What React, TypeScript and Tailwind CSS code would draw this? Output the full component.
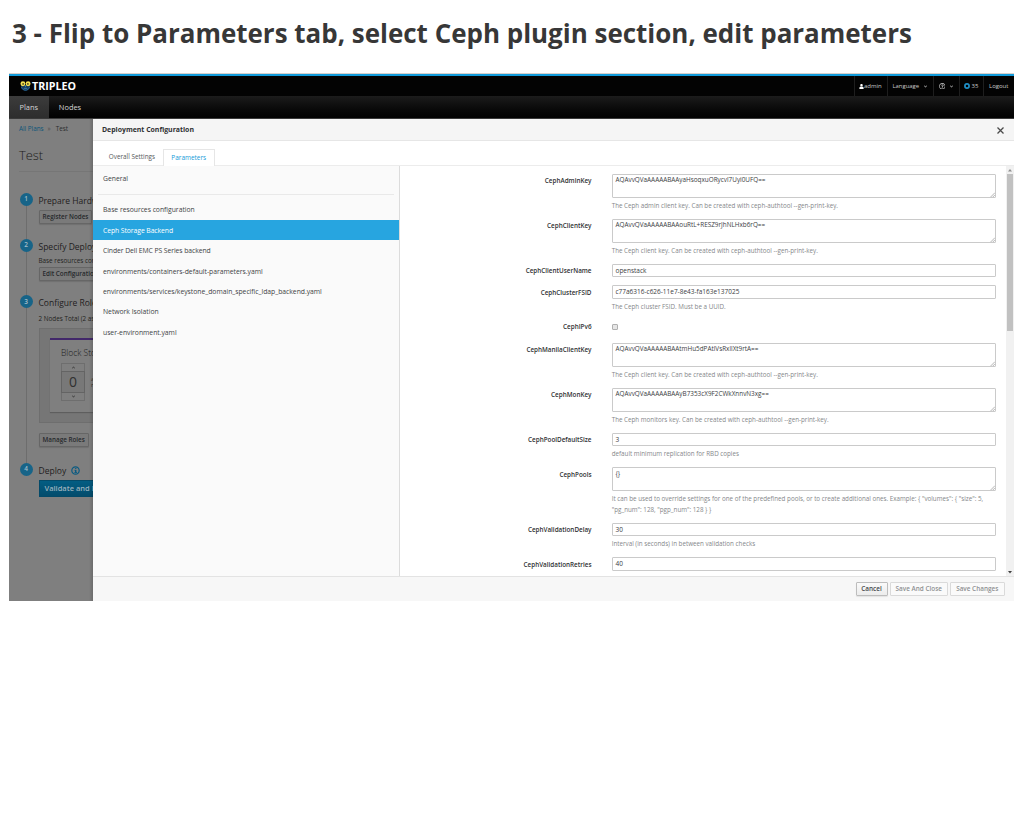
import type { ReactNode } from "react";
import { FaAngleDown, FaAngleUp, FaRegQuestionCircle, FaUser } from "react-icons/fa";

const Logo = () => (
  <svg viewBox="0 0 22 20" className="h-[10px] w-[11px] shrink-0">
    <path d="M2 8 C1 15 5 19.4 11 19.4 S21 15 20 8 Z" fill="#16395a" />
    <path d="M3 12 C4.5 16.5 7.5 18.4 11 18.4 S17.5 16.5 19 12" fill="none" stroke="#2a6fa3" strokeWidth="1.8" />
    <path d="M7.5 14.6 h7" stroke="#4b97c2" strokeWidth="1.4" />
    <circle cx="5.8" cy="5.4" r="4.9" fill="#f3e04f" />
    <circle cx="16.2" cy="5.4" r="4.9" fill="#f3e04f" />
    <circle cx="6.2" cy="5.8" r="1.7" fill="#3a3a20" />
    <circle cx="15.8" cy="5.8" r="1.7" fill="#3a3a20" />
    <path d="M9.4 9 h3.2 l-1.6 3.4 z" fill="#3aa0cf" />
  </svg>
);

const Utility = ({ w, children }: { w: string; children: ReactNode }) => (
  <div className={`flex h-full items-center border-l border-[#1e1e1e] ${w}`}>{children}</div>
);

const Circle = ({ n }: { n: number }) => (
  <div className="absolute -left-[19px] -top-[0.5px] flex size-[13px] items-center justify-center rounded-full bg-[#176488] pt-px text-[6.5px] font-semibold leading-none text-[#a3bcc8]">
    {n}
  </div>
);

const GreyButton = ({ children }: { children: ReactNode }) => (
  <div className="flex h-[14px] w-fit items-center rounded-[1px] border border-[#666] bg-[#7a7a7a] px-[3px] text-[6.32px] font-semibold text-[#26292c] shadow-[0_1px_1px_rgba(0,0,0,0.12)]">
    {children}
  </div>
);

const Step = ({ n, title, h, children }: { n: number; title: ReactNode; h: string; children: ReactNode }) => (
  <div className={`relative ${h}`}>
    <Circle n={n} />
    <div className="flex h-[14px] items-center pt-[2px] text-[8.5px] text-[#1f2021]">{title}</div>
    {children}
  </div>
);

const Backdrop = () => (
  <div className="relative h-full w-[83.5px] shrink-0 overflow-hidden whitespace-nowrap bg-[#7f7f7f]">
    <div className="flex h-[18px] items-center pl-[10px] pt-[0.5px] text-[6.3px]">
      <span className="text-[#0c557a]">All Plans</span>
      <span className="ml-[4px] text-[#4c4c4c]">»</span>
      <span className="ml-[5px] text-[#2c2d2e]">Test</span>
    </div>
    <div className="ml-[10px] flex h-[35px] items-center border-b border-[#767676] pt-[3px] text-[12.9px] font-light text-[#1d1d1d]">
      Test
    </div>
    <div className="relative ml-[29.5px] mt-[21px]">
      <div className="absolute -left-[13px] top-[6px] h-[264px] w-px bg-[#6d6d6d]" />
      <Step n={1} title="Prepare Hardware" h="h-[46px]">
        <div className="mt-[2.5px]">
          <GreyButton>Register Nodes</GreyButton>
        </div>
      </Step>
      <Step n={2} title="Specify Deploym" h="h-[56.5px]">
        <div className="flex h-[13.5px] items-center pt-[3px] text-[6.34px] text-[#1f1f20]">Base resources conf</div>
        <GreyButton>Edit Configuration</GreyButton>
      </Step>
      <Step n={3} title="Configure Roles" h="h-[167.5px]">
        <div className="flex h-[18px] items-center pt-px text-[6.34px] text-[#1f1f20]">2 Nodes Total (2 ass</div>
        <div className="h-[95px] w-[120px] border border-[#6e6e6e] bg-[#767676] pl-[10.5px] pt-[9.5px]">
          <div className="h-[73.5px] border-t-2 border-[#42286a] bg-[#7f7f7f] pl-[11px] shadow-[0_1px_1px_rgba(0,0,0,0.2)]">
            <div className="flex h-[23px] items-center pt-[3px] text-[8.5px] font-light text-[#1c1c1c]">Block Stor</div>
            <div className="flex items-center">
              <div className="flex h-[37.5px] w-[24px] flex-col border border-[#6e6e6e] text-[#444]">
                <div className="flex h-[6.5px] items-center justify-center">
                  <FaAngleUp className="size-[5px]" />
                </div>
                <div className="-mx-px flex flex-1 items-center justify-center border border-[#646464] bg-[#787878] text-[14px] leading-none text-[#303030]">
                  0
                </div>
                <div className="flex h-[6.5px] items-center justify-center">
                  <FaAngleDown className="size-[5px]" />
                </div>
              </div>
              <div className="ml-[6px] text-[5.8px] leading-[6px] text-[#333]">
                a
                <br />
                n
              </div>
            </div>
          </div>
        </div>
        <div className="mt-[10px]">
          <GreyButton>Manage Roles</GreyButton>
        </div>
      </Step>
      <Step
        n={4}
        h="h-[40px]"
        title={
          <>
            Deploy
            <svg viewBox="0 0 18 18" className="mb-[2px] ml-[4.5px] size-[9px]">
              <circle cx="9" cy="9" r="7.4" fill="none" stroke="#0b5b82" strokeWidth="2.4" />
              <path d="M9.4 7.8 v5" stroke="#0b5b82" strokeWidth="3" />
              <path d="M7 8.6 h2 M6.8 13 h5.2 M7.9 5 h3" stroke="#0b5b82" strokeWidth="1.8" />
            </svg>
          </>
        }
      >
        <div className="mt-[3px] flex h-[17px] w-[90px] items-center border border-[#044a69] bg-linear-to-b from-[#035d83] to-[#034c6c] pl-[5px] text-[7.5px] font-semibold text-[#99b2be]">
          Validate and De
        </div>
      </Step>
    </div>
    <div className="absolute inset-y-0 right-0 w-[4px] bg-linear-to-r from-transparent to-black/15" />
  </div>
);

const items = [
  "Base resources configuration",
  "Ceph Storage Backend",
  "Cinder Dell EMC PS Series backend",
  "environments/containers-default-parameters.yaml",
  "environments/services/keystone_domain_specific_ldap_backend.yaml",
  "Network Isolation",
  "user-environment.yaml",
];

const Sidebar = () => (
  <div className="h-full w-[307px] shrink-0 border-r border-[#dcdcdc] bg-[#fafafa] text-[6.8px] text-[#414345]">
    <div className="flex h-[26px] items-center pl-[10.5px] pt-[1.5px]">General</div>
    <div className="ml-[5px] mr-[5px] mt-[2px] h-[1.5px] bg-[#e9e9e9]" />
    <div className="mt-[4.5px]">
      {items.map((t) => (
        <div
          key={t}
          className={`flex h-[20.45px] items-center whitespace-nowrap pl-[10.5px] pt-[1.2px] ${t.startsWith("Ceph") ? "bg-[#27a5e0] text-white" : ""}`}
        >
          <span className={t.startsWith("C") ? "tracking-[-0.07px]" : "tracking-[-0.02px]"}>{t}</span>
        </div>
      ))}
    </div>
  </div>
);

type Field = { label: string; h: string; kind: "area" | "input" | "check"; value?: string; help?: ReactNode };

const fields: Field[] = [
  { label: "CephAdminKey", h: "h-[45px]", kind: "area", value: "AQAvvQVaAAAAABAAyaHsoqxuORycvl7Uyi0UFQ==", help: "The Ceph admin client key. Can be created with ceph-authtool --gen-print-key." },
  { label: "CephClientKey", h: "h-[45px]", kind: "area", value: "AQAvvQVaAAAAABAAouRtL+RESZ9rJhNLHxb6rQ==", help: "The Ceph client key. Can be created with ceph-authtool --gen-print-key." },
  { label: "CephClientUserName", h: "h-[21.5px]", kind: "input", value: "openstack" },
  { label: "CephClusterFSID", h: "h-[34.5px]", kind: "input", value: "c77a6316-c626-11e7-8e43-fa163e137025", help: "The Ceph cluster FSID. Must be a UUID." },
  { label: "CephIPv6", h: "h-[23px]", kind: "check" },
  { label: "CephManilaClientKey", h: "h-[45px]", kind: "area", value: "AQAvvQVaAAAAABAAtmHu5dPAtlVsRxllXt9rtA==", help: "The Ceph client key. Can be created with ceph-authtool --gen-print-key." },
  { label: "CephMonKey", h: "h-[45px]", kind: "area", value: "AQAvvQVaAAAAABAAyB7353cX9F2CWkXnnvN3xg==", help: "The Ceph monitors key. Can be created with ceph-authtool --gen-print-key." },
  { label: "CephPoolDefaultSize", h: "h-[34.5px]", kind: "input", value: "3", help: "default minimum replication for RBD copies" },
  {
    label: "CephPools",
    h: "h-[55.5px]",
    kind: "area",
    value: "{}",
    help: (
      <>
        It can be used to override settings for one of the predefined pools, or to create additional ones. Example: {'{ "volumes": { "size": 5,'}
        <br />
        {'"pg_num": 128, "pgp_num": 128 } }'}
      </>
    ),
  },
  { label: "CephValidationDelay", h: "h-[34.5px]", kind: "input", value: "30", help: "Interval (in seconds) in between validation checks" },
  { label: "CephValidationRetries", h: "h-[13.5px]", kind: "input", value: "40" },
];

const FieldRow = ({ f }: { f: Field }) => (
  <div className={`flex ${f.h}`}>
    <div className="flex h-[13.5px] w-[192px] shrink-0 items-center justify-end whitespace-nowrap pt-px text-[6.33px] font-semibold text-[#2f3133]">
      {f.label}
    </div>
    <div className="ml-[20.2px] w-[384px]">
      {f.kind === "area" && (
        <div className="relative h-[24px] rounded-[1px] border border-[#cacaca] bg-white pl-[2.8px] pt-[0.5px] text-[6.36px] leading-[10px] text-[#3b3d3f]">
          {f.value}
          <svg viewBox="0 0 8 8" className="absolute bottom-0 right-0 size-[5px]">
            <path d="M1 8 L8 1 M4.5 8 L8 4.5" stroke="#8a8a8a" strokeWidth="1" />
          </svg>
        </div>
      )}
      {f.kind === "input" && (
        <div className="flex h-[13.5px] items-center rounded-[1px] border border-[#cacaca] bg-white pl-[2.8px] pt-[1.5px] text-[6.49px] leading-none text-[#3b3d3f]">
          {f.value}
        </div>
      )}
      {f.kind === "check" && (
        <div className="mt-[4px] size-[6px] rounded-[1px] border border-[#b0b0b0] bg-[#e6e6e6]" />
      )}
      {f.help && <div className="mt-[3.4px] whitespace-nowrap text-[6.26px] leading-[10.5px] text-[#85878a]">{f.help}</div>}
    </div>
  </div>
);

const Scrollbar = () => (
  <div className="flex h-full w-[8px] shrink-0 flex-col items-center bg-[#f1f1f1]">
    <svg viewBox="0 0 8 8" className="size-[8px] shrink-0">
      <path d="M2 5.5 L4 3 L6 5.5 Z" fill="#8f8f8f" />
    </svg>
    <div className="h-[157px] w-[6px] shrink-0 bg-[#c1c1c1]" />
    <div className="flex-1" />
    <svg viewBox="0 0 8 8" className="size-[8px] shrink-0">
      <path d="M2 3 L4 5.5 L6 3 Z" fill="#3f3f3f" />
    </svg>
  </div>
);

const Modal = () => (
  <div className="flex h-full min-w-0 flex-1 flex-col bg-white">
    <div className="flex h-[21.5px] shrink-0 items-center justify-between border-b border-[#e6e6e6] bg-[#f5f5f5] pl-[9.5px] pr-[10px] pt-[1.5px]">
      <span className="text-[6.93px] font-bold text-[#2e3032]">Deployment Configuration</span>
      <svg viewBox="0 0 14 14" className="size-[7px]">
        <path d="M1 1 L13 13 M13 1 L1 13" stroke="#4a4a4a" strokeWidth="2.5" />
      </svg>
    </div>
    <div className="flex h-[25px] shrink-0 items-end text-[6.35px]">
      <div className="flex h-[17px] w-[70.5px] items-center justify-end border-b border-[#ececec] pr-[8px] pt-[1.5px] text-[#55585a]">
        Overall Settings
      </div>
      <div className="flex h-[17px] w-[51.5px] items-center justify-center border border-b-0 border-[#e6e6e6] text-[6.45px] text-[#149bd8]">
        Parameters
      </div>
      <div className="h-[17px] flex-1 border-b border-[#ececec]" />
    </div>
    <div className="flex min-h-0 flex-1">
      <Sidebar />
      <div className="min-w-0 flex-1 overflow-hidden pt-[8px]">
        {fields.map((f) => (
          <FieldRow key={f.label} f={f} />
        ))}
      </div>
      <Scrollbar />
    </div>
    <div className="flex h-[25.5px] shrink-0 items-center justify-end gap-[2.5px] border-t border-[#e3e3e3] bg-[#f7f7f7] pr-[9.5px] text-[6.4px] font-semibold">
      <div className="flex h-[14px] w-[32px] items-center justify-center rounded-[1px] border border-[#bdbdbd] bg-linear-to-b from-[#fafafa] to-[#ececec] text-[#43474b] shadow-[0_1px_1px_rgba(0,0,0,0.08)]">
        Cancel
      </div>
      <div className="flex h-[14px] w-[57.5px] items-center justify-center rounded-[1px] border border-[#dadada] bg-[#fafafa] text-[#8e9092]">
        Save And Close
      </div>
      <div className="flex h-[14px] w-[54.5px] items-center justify-center rounded-[1px] border border-[#dadada] bg-[#fafafa] text-[#8e9092]">
        Save Changes
      </div>
    </div>
  </div>
);

export default function App() {
  return (
    <div className="h-[828px] w-[1024px] overflow-hidden bg-white font-['Open_Sans',sans-serif]">
      <h1 className="flex h-[73px] items-center whitespace-nowrap pb-[6px] pl-[12px] text-[25.96px] font-bold text-[#373737]">
        3 - Flip to Parameters tab, select Ceph plugin section, edit parameters
      </h1>
      <div className="ml-[9px] flex h-[528px] w-[1005px] flex-col">
        <div className="h-px shrink-0 bg-[#d6d1ce]" />
        <div className="h-[2px] shrink-0 bg-[#129bdb]" />
        <div className="flex h-[20px] shrink-0 items-center bg-[#030303]">
          <div className="flex items-center pl-[11px]">
            <Logo />
            <span className="ml-px text-[10.7px] font-bold leading-none text-white">TRIPLEO</span>
          </div>
          <div className="ml-auto flex h-full items-center text-[6px] text-[#c9c9c9]">
            <Utility w="w-[33px] pl-[4px]">
              <FaUser className="size-[5px] text-white" />
              <span>admin</span>
            </Utility>
            <Utility w="w-[46px] pl-[4.5px]">
              <span className="text-[5.9px]">Language</span>
              <FaAngleDown className="ml-[3.5px] size-[5px] text-[#999]" />
            </Utility>
            <Utility w="w-[25.5px] pl-[4.5px]">
              <FaRegQuestionCircle className="size-[6.5px]" />
              <FaAngleDown className="ml-[3.5px] size-[5px] text-[#999]" />
            </Utility>
            <Utility w="w-[24.5px] pl-[4.5px]">
              <svg viewBox="0 0 12 12" className="size-[6px]">
                <circle cx="6" cy="6" r="4.2" fill="none" stroke="#1f8fc6" strokeWidth="3.4" />
              </svg>
              <span className="ml-[1.5px]">35</span>
            </Utility>
            <Utility w="w-[31px] pl-[5px]">Logout</Utility>
          </div>
        </div>
        <div className="flex h-[23px] shrink-0 border-b border-[#3a3a3a] bg-linear-to-b from-[#1c1c1c] to-[#020202] text-[7.45px] text-[#d6d6d6]">
          <div className="flex w-[39.5px] items-center justify-center bg-linear-to-b from-[#3c3c3c] to-[#2d2d2d] pt-[1.5px]">Plans</div>
          <div className="flex w-[43px] items-center justify-center pt-[1.5px]">Nodes</div>
        </div>
        <div className="flex min-h-0 flex-1">
          <Backdrop />
          <Modal />
        </div>
      </div>
    </div>
  );
}
